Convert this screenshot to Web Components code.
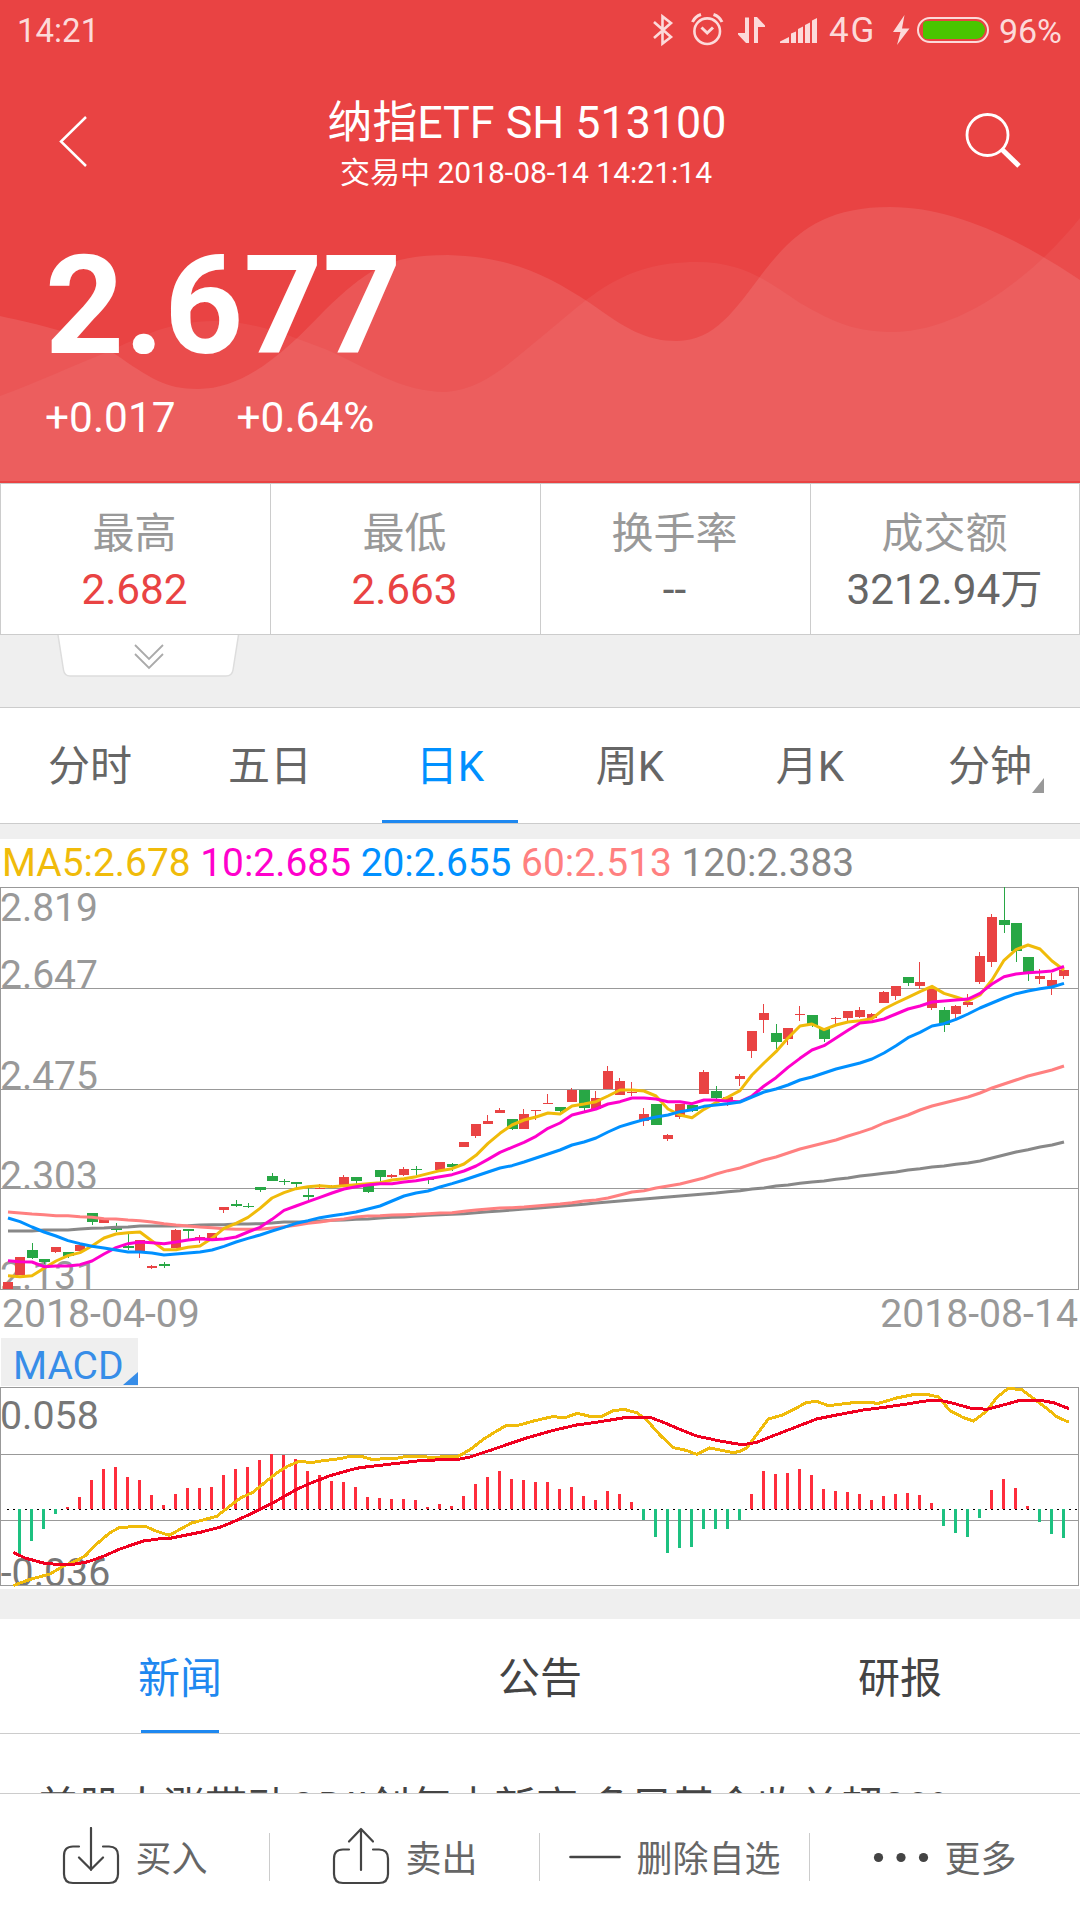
<!DOCTYPE html>
<html lang="zh-CN">
<head>
<meta charset="UTF-8">
<meta name="viewport" content="width=device-width, initial-scale=1.0">
<title>纳指ETF 513100</title>
<style>
    html, body {
        margin: 0;
        padding: 0;
    }
    body {
        width: 1080px;
        height: 1920px;
        overflow: hidden;
        background: #fff;
        font-family: Roboto, "Noto Sans CJK SC", sans-serif;
        color: #666;
    }
</style>
</head>
<body>
<stock-page>
    <quote-header slot="header" price="2.677" change="+0.017" percent="+0.64%">
        <status-bar slot="status" time="14:21" network="4G" battery="96%"></status-bar>
        <span slot="name">纳指ETF SH 513100</span>
        <span slot="state">交易中 2018-08-14 14:21:14</span>
    </quote-header>
    <stat-grid>
        <stat-cell label="最高" rise>2.682</stat-cell>
        <stat-cell label="最低" rise>2.663</stat-cell>
        <stat-cell label="换手率">--</stat-cell>
        <stat-cell label="成交额">3212.94万</stat-cell>
    </stat-grid>
    <expand-handle></expand-handle>
    <tab-bar class="period">
        <tab-item>分时</tab-item>
        <tab-item>五日</tab-item>
        <tab-item active>日K</tab-item>
        <tab-item>周K</tab-item>
        <tab-item>月K</tab-item>
        <tab-item more>分钟</tab-item>
    </tab-bar>
    <section-gap size="15"></section-gap>
    <ma-legend>
        <span style="color: #f0bb0a">MA5:2.678</span>
        <span style="color: #ff00cc">10:2.685</span>
        <span style="color: #0090ff">20:2.655</span>
        <span style="color: #ff8080">60:2.513</span>
        <span style="color: #888">120:2.383</span>
    </ma-legend>
    <kline-chart></kline-chart>
    <date-range>
        <span>2018-04-09</span>
        <span>2018-08-14</span>
    </date-range>
    <indicator-picker>MACD</indicator-picker>
    <macd-chart></macd-chart>
    <section-gap size="30"></section-gap>
    <tab-bar class="news">
        <tab-item active>新闻</tab-item>
        <tab-item>公告</tab-item>
        <tab-item>研报</tab-item>
    </tab-bar>
    <news-list>美股大涨带动QDII创年内新高 多只基金收益超20%</news-list>
    <action-bar slot="footer">
        <action-button icon="buy">买入</action-button>
        <action-button icon="sell">卖出</action-button>
        <action-button icon="remove">删除自选</action-button>
        <action-button icon="more">更多</action-button>
    </action-bar>
</stock-page>

<script>
class StockPage extends HTMLElement {
    constructor() {
        super();
        this.attachShadow({ mode: 'open' }).innerHTML = `
            <style>
                :host {
                    display: flex;
                    flex-direction: column;
                    width: 1080px;
                    height: 1920px;
                }
                main {
                    flex: 1;
                    min-height: 0;
                    overflow: hidden;
                    display: flex;
                    flex-direction: column;
                }
            </style>
            <slot name="header"></slot>
            <main><slot></slot></main>
            <slot name="footer"></slot>
        `;
    }
}

class StatusBar extends HTMLElement {
    constructor() {
        super();
        this.attachShadow({ mode: 'open' });
    }

    connectedCallback() {
        this.shadowRoot.innerHTML = `
            <style>
                :host {
                    display: flex;
                    align-items: center;
                    height: 62px;
                    padding: 0 18px 0 17px;
                    color: #fcdada;
                    font-size: 34px;
                    line-height: 62px;
                }
                .time { flex: 1; font-size: 33px; }
                .net { width: 62px; padding-left: 9px; font-size: 35px; letter-spacing: 2px; box-sizing: border-box; }
                .battery { padding-left: 3px; }
                svg { display: block; flex: none; }
            </style>
            <span class="time">${this.getAttribute('time')}</span>
            <svg width="38" height="62" viewBox="0 0 38 62" fill="none" stroke="#fcdada" stroke-width="2.6">
                <path d="M4 22 L21 37 L12.5 43.5 V16.5 L21 23 L4 38"/>
            </svg>
            <svg width="44" height="62" viewBox="0 0 44 62" fill="none" stroke="#fcdada" stroke-width="2.6">
                <circle cx="19.2" cy="31.2" r="12.8"/>
                <path d="M13.5 27.5 L19.2 33 L25 27.5" stroke-width="3"/>
                <path d="M4.5 22 Q7 16.5 13 14.5 M25.5 14.5 Q31.5 16.5 34 22" stroke-width="3"/>
            </svg>
            <svg width="48" height="62" viewBox="0 0 48 62" fill="#fcdada">
                <path d="M13 17.5 H17 V43 H14 L6 34.5 V33 H13 Z"/>
                <path d="M22 43 V17 H25 L33 25.5 V27 H26 V43 Z"/>
            </svg>
            <svg width="40" height="62" viewBox="0 0 40 62" fill="#fcdada">
                <path d="M0 43 V41.5 L9 37 V43 Z M11 43 V33.5 L16 31.5 V43 Z M18 43 V29 L23 26.5 V43 Z M25 43 V25 L30 22.5 V43 Z M32 43 V20.5 L37 18 V43 Z"/>
            </svg>
            <span class="net">${this.getAttribute('network')}</span>
            <svg width="114" height="62" viewBox="0 0 114 62">
                <path fill="#fcdada" d="M22.5 15 L11 32 H18.5 L15 45 L27.5 28.5 H20 Z"/>
                <rect x="36" y="18" width="70" height="24" rx="12" fill="none" stroke="#fcdada" stroke-width="2"/>
                <rect x="41" y="21" width="62" height="18" rx="9" fill="#49c500"/>
                <rect x="41" y="21" width="20" height="18" rx="4" fill="#49c500"/>
            </svg>
            <span class="battery">${this.getAttribute('battery')}</span>
        `;
    }
}

class QuoteHeader extends HTMLElement {
    constructor() {
        super();
        this.attachShadow({ mode: 'open' });
    }

    connectedCallback() {
        this.shadowRoot.innerHTML = `
            <style>
                :host {
                    display: block;
                    flex: none;
                    position: relative;
                    height: 483px;
                    background: #e94343;
                    color: #fff;
                }
                .waves {
                    position: absolute;
                    left: 0;
                    top: 0;
                }
                .content { position: relative; }
                svg { display: block; flex: none; }
                nav {
                    display: flex;
                    margin-top: 33px;
                    height: 100px;
                }
                .title {
                    flex: 1;
                    text-align: center;
                }
                .name {
                    font-size: 44.8px;
                    line-height: 56px;
                }
                .state {
                    padding-right: 2px;
                    font-size: 30px;
                    line-height: 44px;
                }
                .price {
                    margin: 31px 0 0 45px;
                    font-size: 138px;
                    line-height: 160px;
                    font-weight: bold;
                }
                .change {
                    display: flex;
                    gap: 61px;
                    margin: 2px 0 0 45px;
                    font-size: 42.4px;
                    line-height: 60px;
                }
            </style>
            <svg class="waves" width="1080" height="481" viewBox="0 0 1080 481" fill="#fff">
                <path fill-opacity=".1" d="M0 316 C40 325 80 333 115 354 C150 378 165 389 198 389 C245 389 285 352 325 310 C365 272 385 255 448 255 C515 257 550 277 590 303 C625 328 645 341 677 341 C715 341 735 310 765 270 C795 232 825 207 890 207 C955 207 1020 240 1080 280 V481 H0 Z"/>
                <path fill-opacity=".05" d="M0 396 C40 381 70 367 105 353 C145 335 170 321 214 321 C255 321 290 336 325 349 C365 366 400 392 446 392 C485 389 510 362 545 334 C590 298 620 262 697 262 C745 262 770 283 800 303 C835 323 855 332 895 332 C960 330 1030 280 1080 218 V481 H0 Z"/>
            </svg>
            <div class="content">
                <slot name="status"></slot>
                <nav>
                    <svg width="100" height="100" fill="none" stroke="#fff" stroke-width="2.5">
                        <path d="M86 22 L61 46.5 L86 71"/>
                    </svg>
                    <div class="title">
                        <div class="name"><slot name="name"></slot></div>
                        <div class="state"><slot name="state"></slot></div>
                    </div>
                    <svg width="126" height="100" fill="none" stroke="#fff">
                        <circle cx="33.5" cy="40" r="20.5" stroke-width="2.8"/>
                        <path d="M47.5 54 L65 71" stroke-width="5"/>
                    </svg>
                </nav>
                <div class="price">${this.getAttribute('price')}</div>
                <div class="change">
                    <span>${this.getAttribute('change')}</span>
                    <span>${this.getAttribute('percent')}</span>
                </div>
            </div>
        `;
    }
}

class StatGrid extends HTMLElement {
    constructor() {
        super();
        this.attachShadow({ mode: 'open' }).innerHTML = `
            <style>
                :host {
                    display: grid;
                    grid-template-columns: repeat(4, 1fr);
                    flex: none;
                    box-sizing: border-box;
                    height: 152px;
                    border-top: 1px solid #ccc;
                    border-bottom: 1px solid #ccc;
                    box-shadow: inset -1px 0 #ccc;
                    background: #fff;
                }
            </style>
            <slot></slot>
        `;
    }
}

class StatCell extends HTMLElement {
    constructor() {
        super();
        this.attachShadow({ mode: 'open' });
    }

    connectedCallback() {
        this.shadowRoot.innerHTML = `
            <style>
                :host {
                    display: block;
                    box-sizing: border-box;
                    padding: 22px 2px 0 0;
                    border-left: 1px solid #ccc;
                    text-align: center;
                    font-size: 42px;
                    line-height: 56px;
                    color: #666;
                }
                :host([rise]) { color: #e94343; }
                .label { color: #999; }
                .value { font-size: 42.3px; }
            </style>
            <div class="label">${this.getAttribute('label')}</div>
            <div class="value"><slot></slot></div>
        `;
    }
}

class ExpandHandle extends HTMLElement {
    constructor() {
        super();
        this.attachShadow({ mode: 'open' }).innerHTML = `
            <style>
                :host {
                    display: block;
                    flex: none;
                    height: 72px;
                    padding-left: 57px;
                    background: #efefef;
                }
                svg { display: block; }
            </style>
            <svg width="184" height="44" viewBox="0 0 184 44">
                <path fill="#fff" stroke="#ddd" stroke-width="1.5" d="M1 0 L6.5 35 Q7.5 41 13 41 H169 Q175 41 176 35 L181.5 0"/>
                <path fill="none" stroke="#aaa" stroke-width="1.8" d="M78 10 L92 24 L106 10 M78 19 L92 33 L106 19"/>
            </svg>
        `;
    }
}

class TabBar extends HTMLElement {
    constructor() {
        super();
        this.attachShadow({ mode: 'open' }).innerHTML = `
            <style>
                :host {
                    display: flex;
                    flex: none;
                    box-sizing: border-box;
                    background: #fff;
                    border-bottom: 1px solid #ccc;
                }
                :host(.period) {
                    height: 117px;
                    border-top: 1px solid #ccc;
                    --shift: 3px;
                    --line-width: 136px;
                    --active: #0090ff;
                }
                :host(.news) {
                    height: 115px;
                    color: #444;
                    --shift: 5px;
                    --line-width: 78px;
                    --active: #1e88f0;
                }
            </style>
            <slot></slot>
        `;
    }
}

class TabItem extends HTMLElement {
    constructor() {
        super();
        this.attachShadow({ mode: 'open' }).innerHTML = `
            <style>
                :host {
                    display: flex;
                    flex: 1;
                    align-items: center;
                    justify-content: center;
                    position: relative;
                    padding-top: var(--shift);
                    font-size: 42px;
                    line-height: 60px;
                }
                :host([active]) { color: var(--active); }
                :host([active])::after {
                    content: "";
                    position: absolute;
                    bottom: 0;
                    left: calc(50% - var(--line-width) / 2);
                    width: var(--line-width);
                    height: 3px;
                    background: #1e88f0;
                }
                :host([more])::after {
                    content: "";
                    position: absolute;
                    right: 36px;
                    bottom: 30px;
                    width: 12px;
                    height: 15px;
                    background: #999;
                    clip-path: polygon(100% 0, 100% 100%, 0 100%);
                }
            </style>
            <slot></slot>
        `;
    }
}

class SectionGap extends HTMLElement {
    connectedCallback() {
        this.attachShadow({ mode: 'open' }).innerHTML = `
            <style>
                :host {
                    display: block;
                    flex: none;
                    height: ${this.getAttribute('size')}px;
                    background: #efefef;
                }
            </style>
        `;
    }
}

class MaLegend extends HTMLElement {
    constructor() {
        super();
        this.attachShadow({ mode: 'open' }).innerHTML = `
            <style>
                :host {
                    display: flex;
                    flex: none;
                    gap: 9.6px;
                    height: 48px;
                    padding-left: 2px;
                    font-size: 38.9px;
                    line-height: 48px;
                }
            </style>
            <slot></slot>
        `;
    }
}

class DateRange extends HTMLElement {
    constructor() {
        super();
        this.attachShadow({ mode: 'open' }).innerHTML = `
            <style>
                :host {
                    display: flex;
                    flex: none;
                    justify-content: space-between;
                    height: 48px;
                    padding: 0 2px;
                    font-size: 39.2px;
                    line-height: 48px;
                    color: #999;
                }
            </style>
            <slot></slot>
        `;
    }
}

class IndicatorPicker extends HTMLElement {
    constructor() {
        super();
        this.attachShadow({ mode: 'open' }).innerHTML = `
            <style>
                :host {
                    display: block;
                    flex: none;
                    position: relative;
                    box-sizing: border-box;
                    width: 137px;
                    height: 48px;
                    margin: 0 0 1px 1px;
                    padding: 8px 0 0 12px;
                    background: #efefef;
                    color: #378de8;
                    font-size: 39px;
                    line-height: 40px;
                }
                :host::after {
                    content: "";
                    position: absolute;
                    right: 0;
                    bottom: 1px;
                    width: 15px;
                    height: 13px;
                    background: #378de8;
                    clip-path: polygon(100% 0, 100% 100%, 0 100%);
                }
            </style>
            <slot></slot>
        `;
    }
}

// Both charts draw in thirds of a pixel: 36 units from one day to the next.
const STEP = 36;

const SERIES = {
    ma120: { color: '#888', values: [
        1053, 1053, 1053, 1050, 1050, 1050, 1047, 1045, 1044, 1042, 1041, 1038, 1038, 1038, 1038, 1037, 1035, 1034, 1034, 1032,
        1032, 1031, 1029, 1026, 1026, 1025, 1023, 1021, 1020, 1018, 1017, 1014, 1012, 1011, 1008, 1006, 1004, 1003, 1001, 998,
        995, 993, 990, 987, 985, 982, 979, 976, 973, 969, 966, 963, 960, 957, 954, 951, 948, 945, 942, 939,
        935, 932, 927, 924, 918, 915, 910, 906, 903, 898, 894, 888, 884, 880, 876, 870, 866, 861, 858, 853,
        849, 843, 834, 825, 816, 809, 801, 795, 786] },
    ma60: { color: '#ff8080', values: [
        996, 999, 1002, 1004, 1007, 1007, 1010, 1012, 1016, 1017, 1020, 1022, 1026, 1031, 1035, 1038, 1041, 1043, 1046, 1048,
        1048, 1048, 1044, 1040, 1036, 1030, 1026, 1021, 1017, 1011, 1008, 1007, 1005, 1004, 1003, 1001, 999, 998, 994, 990,
        987, 984, 983, 981, 978, 975, 972, 968, 963, 960, 954, 945, 936, 932, 924, 918, 912, 903, 894, 882,
        872, 864, 852, 840, 831, 819, 807, 798, 789, 780, 768, 757, 745, 729, 717, 705, 690, 678, 669, 660,
        651, 639, 624, 612, 600, 588, 579, 570, 558] },
    ma5: { color: '#f0bb0a', values: [
        1187, 1190, 1187, 1165, 1143, 1127, 1118, 1098, 1074, 1062, 1058, 1056, 1083, 1109, 1109, 1102, 1098, 1075, 1045, 1030,
        1012, 985, 954, 938, 926, 920, 917, 920, 917, 914, 911, 908, 900, 896, 890, 881, 872, 866, 852, 826,
        790, 760, 735, 720, 711, 699, 702, 678, 672, 665, 648, 630, 630, 633, 648, 687, 705, 713, 688, 668,
        651, 632, 585, 549, 515, 474, 438, 432, 449, 435, 426, 422, 416, 387, 369, 352, 335, 319, 340, 351,
        363, 345, 300, 241, 209, 195, 207, 243, 270] },
    ma10: { color: '#ff00cc', values: [
        1142, 1145, 1146, 1160, 1158, 1158, 1154, 1143, 1122, 1103, 1091, 1086, 1088, 1091, 1086, 1080, 1076, 1079, 1077, 1071,
        1056, 1042, 1018, 991, 978, 965, 952, 939, 927, 920, 915, 911, 911, 906, 902, 896, 890, 884, 873, 858,
        838, 817, 802, 787, 769, 745, 729, 705, 696, 687, 672, 665, 654, 654, 657, 665, 665, 671, 660, 660,
        664, 665, 648, 618, 593, 562, 535, 510, 497, 474, 451, 429, 425, 417, 402, 387, 378, 366, 363, 360,
        357, 340, 312, 290, 282, 278, 276, 273, 259] },
    ma20: { color: '#0090ff', values: [
        1014, 1025, 1041, 1056, 1068, 1082, 1091, 1099, 1104, 1110, 1116, 1116, 1119, 1125, 1122, 1119, 1116, 1110, 1099, 1086,
        1075, 1065, 1053, 1042, 1030, 1022, 1013, 1007, 1002, 996, 987, 978, 963, 948, 939, 933, 921, 911, 900, 888,
        876, 864, 857, 846, 834, 822, 810, 795, 786, 774, 756, 740, 729, 719, 711, 705, 695, 689, 679, 675,
        671, 666, 651, 636, 627, 615, 600, 591, 579, 567, 558, 549, 537, 519, 497, 473, 457, 438, 431, 418,
        402, 384, 369, 354, 341, 333, 326, 321, 310] }
};

// [direction, body top, body bottom, wick top, wick bottom]
const CANDLES = [
    ['r', 1206, 1228], ['r', 1131, 1186], ['g', 1110, 1134, 1089, 1137], ['g', 1137, 1146, 1137, 1152],
    ['r', 1101, 1116, 1101, 1119], ['g', 1116, 1128, 1116, 1133], ['r', 1095, 1113], ['g', 999, 1026, 999, 1035],
    ['r', 1018, 1029], ['g', 1045, 1050, 1030, 1056], ['g', 1098, 1104, 1062, 1110], ['r', 1080, 1113, 1080, 1134],
    ['r', 1158, 1164, 1155, 1168], ['g', 1152, 1158, 1146, 1164], ['r', 1050, 1105, 1047, 1105], ['g', 1047, 1053, 1047, 1077],
    ['r', 1071, 1074, 1065, 1089], ['r', 1059, 1074], ['r', 981, 990, 981, 999], ['g', 972, 978, 960, 981],
    ['g', 978, 981, 969, 984], ['g', 921, 930, 921, 936], ['g', 888, 903, 879, 903], ['g', 903, 906, 897, 915],
    ['g', 906, 912, 906, 924], ['g', 945, 951, 925, 960], ['r', 924, 927, 912, 927], ['r', 918, 921, 914, 921],
    ['r', 891, 915, 885, 915], ['g', 891, 903, 891, 912], ['g', 915, 936, 915, 939], ['g', 870, 891, 870, 906],
    ['r', 885, 891, 882, 894], ['r', 867, 885, 861, 888], ['g', 867, 870, 858, 885], ['g', 897, 900, 892, 912],
    ['r', 846, 870], ['g', 852, 861, 849, 873], ['r', 786, 801], ['r', 732, 768, 732, 774],
    ['r', 723, 732, 705, 732], ['r', 690, 699, 684, 699], ['g', 717, 747, 717, 750], ['r', 702, 747, 687, 747],
    ['r', 690, 693, 690, 720], ['r', 669, 672, 642, 672], ['g', 681, 693, 681, 696], ['r', 630, 666, 624, 666],
    ['g', 630, 684, 630, 693], ['r', 654, 687, 633, 687], ['r', 573, 628, 558, 628], ['r', 603, 645, 594, 645],
    ['r', 636, 639, 606, 648], ['r', 702, 723, 684, 738], ['g', 672, 735], ['r', 765, 777, 762, 783],
    ['r', 672, 711, 672, 717], ['g', 675, 693, 675, 696], ['r', 576, 642, 570, 642], ['g', 633, 654, 618, 657],
    ['r', 651, 666, 651, 678], ['r', 588, 597, 582, 618], ['r', 453, 513, 453, 534], ['r', 399, 420, 372, 459],
    ['g', 459, 486, 432, 507], ['r', 444, 477, 444, 495], ['r', 402, 405, 378, 423], ['g', 405, 435, 405, 441],
    ['g', 447, 477, 447, 486], ['r', 414, 417, 411, 432], ['r', 393, 414, 393, 423], ['r', 390, 411, 381, 414],
    ['r', 402, 415, 399, 415], ['r', 336, 369, 333, 369], ['r', 318, 348, 318, 360], ['g', 291, 309, 291, 318],
    ['r', 306, 318, 246, 327], ['r', 327, 384, 327, 390], ['g', 390, 435, 381, 456], ['r', 378, 402, 375, 417],
    ['r', 366, 375, 342, 381], ['r', 228, 306, 216, 312], ['r', 111, 246, 102, 261], ['g', 120, 135, 22, 159],
    ['g', 129, 213, 129, 246], ['g', 231, 276, 231, 303], ['r', 288, 297, 267, 312], ['r', 300, 318, 279, 345],
    ['r', 270, 288, 270, 297]
];

class KlineChart extends HTMLElement {
    constructor() {
        super();
        this.attachShadow({ mode: 'open' });
    }

    connectedCallback() {
        const labels = [['2.819', 123], ['2.647', 325], ['2.475', 627], ['2.303', 926], ['2.131', 1227]];
        const grid = [22.5, 325.5, 628.5, 925.5, 1228.5];
        this.shadowRoot.innerHTML = `
            <style>
                :host { display: block; flex: none; height: 403px; }
                svg { display: block; }
                text { font-size: 117px; fill: #999; }
                .grid { stroke: #999; stroke-width: 3; fill: none; }
            </style>
            <svg width="1080" height="403" viewBox="0 21 3240 1209">
                ${labels.map(([t, y]) => `<text x="0" y="${y}">${t}</text>`).join('')}
                <g class="grid" shape-rendering="crispEdges">
                    ${grid.map(y => `<path d="M0 ${y} H3237"/>`).join('')}
                    <path d="M1.5 21 V1230 M3235.5 21 V1230"/>
                </g>
                <g shape-rendering="crispEdges">${CANDLES.map((c, i) => this.candle(c, i)).join('')}</g>
                ${Object.values(SERIES).map(s => this.line(s)).join('')}
            </svg>
        `;
    }

    candle([dir, top, bottom, high = top, low = bottom], i) {
        const left = 9 + i * STEP;
        const color = dir === 'r' ? '#e94343' : '#28a745';
        const width = dir === 'r' ? 30 : 33;
        const wick = left + (dir === 'r' ? 12 : 15);
        return `<rect x="${left}" y="${top}" width="${width}" height="${bottom - top}" fill="${color}"/>
            <rect x="${wick}" y="${high}" width="3" height="${low - high}" fill="${color}"/>`;
    }

    line({ color, values }) {
        const points = values.map((y, i) => `${24 + i * STEP},${y}`).join(' ');
        return `<polyline points="${points}" fill="none" stroke="${color}" stroke-width="9" stroke-linejoin="round"/>`;
    }
}

const ZERO = 568;

// end of each bar, measured from the zero line
const BARS = [
    709, 663, 627, 582, 561, 531, 480, 447, 441, 471, 480, 525, 555, 522, 504, 504, 501, 465, 447, 441,
    420, 402, 405, 417, 453, 465, 483, 486, 501, 531, 534, 537, 537, 540, 561, 552, 558, 528, 492, 471,
    453, 477, 480, 486, 486, 507, 501, 528, 540, 513, 522, 546, 600, 651, 699, 684, 681, 627, 627, 627,
    600, 522, 453, 462, 459, 447, 465, 507, 513, 516, 522, 540, 528, 522, 519, 525, 549, 618, 639, 651,
    594, 510, 477, 504, 558, 606, 642, 654
];

const DIF = `40,797 58,790 94,777 150,762 190,738 220,726 255,708 290,672 330,638 360,622 436,619 470,634
    508,646 545,625 575,609 650,589 690,558 720,535 760,516 800,483 830,459 860,440 895,425 940,427 970,422
    1020,416 1050,409 1090,411 1115,418 1190,415 1220,409 1275,410 1295,414 1330,410 1375,409 1410,389
    1450,358 1490,333 1518,317 1558,315 1600,303 1658,290 1695,293 1732,280 1770,289 1805,289 1840,272
    1872,268 1912,279 1940,300 1980,345 2020,383 2058,391 2090,403 2128,384 2160,390 2200,398 2220,394
    2240,384 2260,357 2305,297 2345,286 2382,268 2418,248 2450,244 2485,257 2560,248 2600,247 2635,250
    2690,234 2740,224 2775,222 2815,231 2850,272 2890,293 2920,303 2957,276 2990,233 3025,205 3065,209
    3100,235 3140,265 3170,290 3207,307`;

const DEA = `40,697 75,714 130,729 180,734 220,733 265,725 310,709 360,687 430,663 475,657 515,654 600,637
    660,622 710,601 760,578 820,548 890,508 930,490 990,467 1050,450 1080,443 1140,436 1190,430 1270,421
    1375,418 1410,411 1480,388 1520,374 1580,354 1660,331 1730,315 1795,306 1880,292 1950,292 1985,305
    2030,324 2090,348 2160,363 2200,370 2230,374 2270,367 2310,351 2370,328 2450,297 2510,285 2590,270
    2660,261 2720,252 2790,241 2825,242 2860,250 2910,264 2960,268 3010,255 3060,241 3120,241 3160,248 3207,266`;

class MacdChart extends HTMLElement {
    constructor() {
        super();
        this.attachShadow({ mode: 'open' });
    }

    connectedCallback() {
        this.shadowRoot.innerHTML = `
            <style>
                :host { display: block; flex: none; height: 200px; margin-bottom: 2px; }
                svg { display: block; }
                text { font-size: 118px; fill: #777; }
                .grid { stroke: #999; stroke-width: 3; fill: none; }
                .lines { fill: none; stroke-width: 9; }
            </style>
            <svg width="1080" height="200" viewBox="0 201 3240 600">
                <text x="0" y="327">0.058</text>
                <text x="2" y="798">-0.036</text>
                <g shape-rendering="crispEdges">
                    <path class="grid" d="M0 202.5 H3237 M0 403.5 H3237 M0 601.5 H3237 M0 796.5 H3237 M1.5 201 V798 M3235.5 201 V798"/>
                    <path d="M21 568.5 H3231" stroke="#000" stroke-width="3" stroke-dasharray="6 12"/>
                    ${BARS.map((y, i) => this.bar(y, i)).join('')}
                </g>
                <g class="lines" shape-rendering="crispEdges">
                    <polyline points="${DIF}" stroke="#f0bb0a"/>
                    <polyline points="${DEA}" stroke="#f00020"/>
                </g>
            </svg>
        `;
    }

    bar(y, i) {
        const color = y < ZERO ? '#ff2d3c' : '#1dc180';
        return `<rect x="${54 + i * STEP}" y="${Math.min(y, ZERO - 1)}" width="9" height="${Math.abs(ZERO - 1 - y)}" fill="${color}"/>`;
    }
}

class NewsList extends HTMLElement {
    constructor() {
        super();
        this.attachShadow({ mode: 'open' }).innerHTML = `
            <style>
                :host {
                    display: block;
                    flex: 1;
                    min-height: 0;
                    overflow: hidden;
                    background: #fff;
                    color: #444;
                    font-size: 42px;
                    line-height: 60px;
                }
                .row {
                    padding: 44px 37px 0;
                    white-space: nowrap;
                }
            </style>
            <div class="row"><slot></slot></div>
        `;
    }
}

class ActionBar extends HTMLElement {
    constructor() {
        super();
        this.attachShadow({ mode: 'open' }).innerHTML = `
            <style>
                :host {
                    display: grid;
                    grid-template-columns: repeat(4, 270px);
                    flex: none;
                    box-sizing: border-box;
                    height: 127px;
                    border-top: 1px solid #ccc;
                    background: #fff;
                }
            </style>
            <slot></slot>
        `;
    }
}

const ICONS = {
    buy: [58, '<path d="M17 19.5 H11 Q2 19.5 2 28.5 V47 Q2 56 11 56 H47 Q56 56 56 47 V28.5 Q56 19.5 47 19.5 H41 M29 1 V43 M17 30.5 L29 42.5 L41 30.5"/>'],
    sell: [58, '<path d="M17 22.5 H11 Q2 22.5 2 31.5 V47 Q2 56 11 56 H47 Q56 56 56 47 V31.5 Q56 22.5 47 22.5 H41 M29 43 V2 M17 14.5 L29 2 L41 14.5"/>'],
    remove: [52, '<path d="M1.5 30 H50.5" stroke-width="2.6"/>'],
    more: [56, '<g fill="#444" stroke="none"><circle cx="5.5" cy="30.5" r="4.6"/><circle cx="28" cy="30.5" r="4.6"/><circle cx="50.5" cy="30.5" r="4.6"/></g>']
};

class ActionButton extends HTMLElement {
    constructor() {
        super();
        this.attachShadow({ mode: 'open' });
    }

    connectedCallback() {
        const [width, shape] = ICONS[this.getAttribute('icon')];
        this.shadowRoot.innerHTML = `
            <style>
                :host {
                    display: flex;
                    align-items: center;
                    justify-content: center;
                    gap: 15px;
                    background: linear-gradient(#ccc, #ccc) right 39px / 1px 48px no-repeat;
                    font-size: 36px;
                    line-height: 48px;
                    color: #666;
                }
                :host(:last-of-type) { background: none; }
                svg { display: block; }
                span { padding-top: 5px; }
            </style>
            <svg width="${width}" height="60" viewBox="0 0 ${width} 60" fill="none" stroke="#444" stroke-width="2.2" stroke-linecap="round" stroke-linejoin="round">${shape}</svg>
            <span><slot></slot></span>
        `;
    }
}

customElements.define('stock-page', StockPage);
customElements.define('status-bar', StatusBar);
customElements.define('quote-header', QuoteHeader);
customElements.define('stat-grid', StatGrid);
customElements.define('stat-cell', StatCell);
customElements.define('expand-handle', ExpandHandle);
customElements.define('tab-bar', TabBar);
customElements.define('tab-item', TabItem);
customElements.define('section-gap', SectionGap);
customElements.define('ma-legend', MaLegend);
customElements.define('kline-chart', KlineChart);
customElements.define('date-range', DateRange);
customElements.define('indicator-picker', IndicatorPicker);
customElements.define('macd-chart', MacdChart);
customElements.define('news-list', NewsList);
customElements.define('action-bar', ActionBar);
customElements.define('action-button', ActionButton);
</script>
</body>
</html>
